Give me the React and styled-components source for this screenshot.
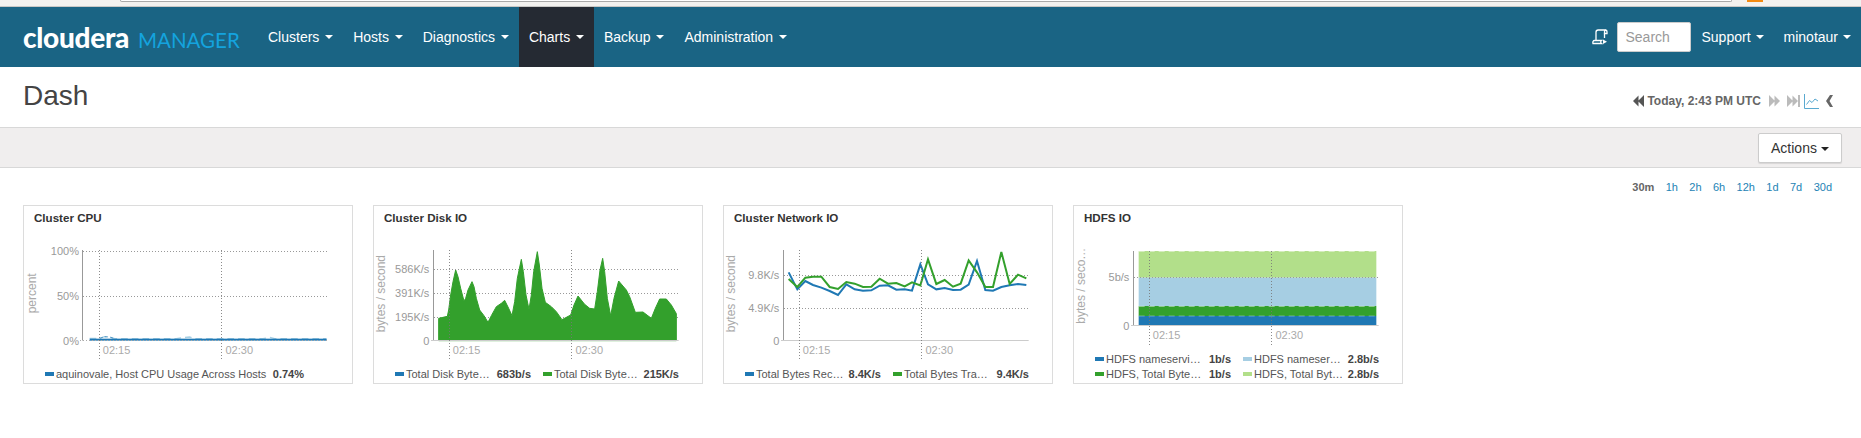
import React from "react";
import styled, { createGlobalStyle } from "styled-components";

const Global = createGlobalStyle`
  html, body { margin: 0; padding: 0; background: #fff; }
  body { font-family: "Liberation Sans", Arial, sans-serif; color: #333; overflow: hidden; }
`;

const Page = styled.div`
  width: 1861px;
  height: 438px;
  overflow: hidden;
`;

const BrowserEdge = styled.div`
  height: 6px;
  display: flex;
  align-items: flex-start;
  background: #f2f1ef;
  border-bottom: 1px solid #c9c8c6;
`;
const AddressBar = styled.div`
  margin-left: 120px;
  width: 1610px;
  height: 1px;
  background: #fff;
  border: 1px solid #a9a9a9;
  border-top: 0;
  border-radius: 0 0 2px 2px;
`;
const OrangeTab = styled.div`
  margin-left: 15px;
  width: 16px;
  height: 2px;
  background: #f28a12;
`;

const Navbar = styled.nav`
  height: 60px;
  display: flex;
  align-items: stretch;
  background: #1a6484;
`;
const Logo = styled.div`
  width: 235px;
  padding-left: 23px;
  display: flex;
  align-items: baseline;
  padding-top: 12px;
  box-sizing: content-box;
  font-family: Lato, sans-serif;
`;
const LogoMain = styled.span`
  font-size: 28px;
  line-height: 36px;
  font-weight: 900;
  color: #fff;
  letter-spacing: -0.3px;
`;
const LogoSub = styled.span`
  margin-left: 9px;
  font-size: 20.5px;
  font-weight: 400;
  color: #14a3de;
`;
const NavItem = styled.a`
  display: flex;
  align-items: center;
  padding: 0 10px;
  font-size: 14px;
  color: #fff;
  background: ${(p) => (p.$active ? "#252a33" : "transparent")};
`;
const Caret = styled.span`
  display: inline-block;
  margin-left: ${(p) => p.$gap ?? 5.8}px;
  vertical-align: 2px;
  width: 0;
  height: 0;
  border-top: 4px solid ${(p) => p.$color || "#fff"};
  border-left: 4px solid transparent;
  border-right: 4px solid transparent;
`;
const NavRight = styled.div`
  margin-left: auto;
  display: flex;
  align-items: stretch;
`;
const ScrollButton = styled.div`
  display: flex;
  align-items: center;
  padding-right: 9px;
`;
const SearchBox = styled.div`
  align-self: center;
  width: 74px;
  height: 30px;
  box-sizing: border-box;
  padding-left: 7px;
  display: flex;
  align-items: center;
  background: #fff;
  border: 1px solid #ccc;
  border-radius: 2px;
  font-size: 14px;
  color: #999;
`;

const Header = styled.header`
  height: 60px;
  display: flex;
  justify-content: space-between;
  align-items: center;
  padding: 0 28px 0 23px;
  border-bottom: 1px solid #d8d8d8;
  box-sizing: content-box;
`;
const Title = styled.h1`
  margin: 0 0 2px;
  font-size: 28px;
  line-height: 40px;
  font-weight: 400;
  color: #444;
`;
const TimeControls = styled.div`
  display: flex;
  align-items: center;
  margin-top: 8px;
`;
const TimeText = styled.span`
  margin: 0 8px 0 3px;
  font-size: 12px;
  font-weight: 700;
  color: #666;
`;
const IconSlot = styled.svg`
  display: block;
  margin-right: ${(p) => p.$gap || 0}px;
`;

const Toolbar = styled.div`
  height: 39px;
  display: flex;
  justify-content: flex-end;
  align-items: center;
  padding-right: 19px;
  background: #f0eeee;
  border-bottom: 1px solid #d8d8d8;
`;
const ActionsButton = styled.button`
  width: 84px;
  height: 30px;
  padding: 0;
  background: #fff;
  border: 1px solid #ccc;
  border-radius: 2px;
  font: 14px "Liberation Sans", Arial, sans-serif;
  color: #333;
  box-shadow: 0 1px 1px rgba(0, 0, 0, 0.1);
`;

const RangeRow = styled.div`
  height: 37px;
  display: flex;
  justify-content: flex-end;
  align-items: center;
  gap: 11.4px;
  padding-right: 29px;
  font-size: 11px;
`;
const RangeLink = styled.a`
  color: ${(p) => (p.$active ? "#666" : "#2483b5")};
  font-weight: ${(p) => (p.$active ? 700 : 400)};
`;

const Cards = styled.div`
  display: flex;
  gap: 20px;
  padding-left: 23px;
`;
const Card = styled.section`
  width: 330px;
  height: 179px;
  box-sizing: border-box;
  border: 1px solid #dcdcdc;
  display: flex;
  flex-direction: column;
`;
const CardTitle = styled.h3`
  margin: 0;
  height: 19px;
  padding: 5px 0 0 10px;
  box-sizing: border-box;
  font-size: 11.6px;
  line-height: 14px;
  font-weight: 700;
  color: #333;
`;
const ChartSvg = styled.svg`
  display: block;
  width: 328px;
  height: 137px;
`;
const Tick = styled.text`
  font-size: 33px;
  fill: #999;
  text-anchor: end;
  font-family: "Liberation Sans", Arial, sans-serif;
`;
const TimeLabel = styled.text`
  font-size: 33px;
  fill: #aaa;
  font-family: "Liberation Sans", Arial, sans-serif;
`;
const AxisLabel = styled.text`
  font-size: 36px;
  fill: #aaa;
  text-anchor: middle;
  font-family: "Liberation Sans", Arial, sans-serif;
`;
const Legend = styled.div`
  display: grid;
  grid-template-columns: ${(p) => (p.$single ? "259px" : "136px 136px")};
  column-gap: 12px;
  row-gap: 1px;
  padding-left: 21px;
  margin-top: ${(p) => p.$mt ?? 5}px;
`;
const LegendItem = styled.div`
  display: flex;
  align-items: center;
  height: 14px;
  font-size: 11px;
  color: #555;
  white-space: nowrap;
`;
const Swatch = styled.span`
  flex: none;
  width: 9px;
  height: 4px;
  margin-right: 2px;
  background: ${(p) => p.$color};
`;
const LegendValue = styled.b`
  margin-left: auto;
  color: #444;
`;

const BLUE = "#1f78b4";
const GREEN = "#33a02c";
const LBLUE = "#a6cee3";
const LGREEN = "#b2df8a";

const pts = (s) => s.trim().replace(/\s+/g, " ");

const DISK = pts(`222,370 235,367 248,364 252,345 258,300 265,260 273,225 280,245 288,280 298,318 303,310 310,285 322,260 328,275 335,310 345,345 358,362 370,382 380,362 395,335 410,325 420,316 432,340 442,362 450,320 458,250 470,193 476,230 484,300 493,343 500,300 507,230 518,170 524,210 532,280 542,322 560,335 575,350 592,374 605,367 618,360 628,330 640,303 660,328 675,340 690,342 698,290 706,225 714,190 720,230 728,310 738,362 748,310 762,258 785,285 795,305 812,352 835,351 860,370 872,340 885,312 905,312 920,330 935,356 935,437 222,437`);
const NET_BLUE = pts(`222,232 248,283 272,258 295,270 320,278 345,288 370,300 395,268 420,283 445,287 470,286 495,272 520,271 545,284 570,283 592,287 617,208 640,268 665,283 690,279 715,285 738,284 762,269 787,198 812,285 835,287 860,276 885,271 910,267 935,270`);
const NET_GREEN = pts(`222,252 248,276 272,248 295,245 320,245 345,276 370,282 395,261 420,266 445,276 470,275 495,251 520,266 545,264 570,274 592,262 617,271 640,193 665,267 690,255 715,275 738,266 762,196 787,232 812,276 835,276 860,171 885,267 910,239 935,250`);
const CPU_TOP = pts(`240,430 270,430 285,425 300,426 315,431 500,431 520,428 540,426 555,431 760,431 780,427 795,431 950,431`);

const charts = [
  {
    title: "Cluster CPU",
    x0: 40, axis: 218, right: 958, v1: 268, v2: 634, base: 437, top: 165, vEnd: 497, timeY: 477,
    yLabel: "percent", yLabelX: 79, yLabelY: 295, tickX: 208, baseDotted: true,
    ticks: [["100%", 169], ["50%", 303], ["0%", 437]],
    body: (
      <>
        <polyline points={CPU_TOP} fill="none" stroke={LBLUE} strokeWidth="4" strokeDasharray="20 12" />
        <polyline points="270,430 285,425 300,426 315,431" fill="none" stroke={BLUE} strokeWidth="2" strokeDasharray="10 6" />
        <rect x="240" y="431" width="711" height="6" fill={BLUE} />
      </>
    ),
    legend: [["aquinovale, Host CPU Usage Across Hosts", "0.74%", BLUE]],
  },
  {
    title: "Cluster Disk IO",
    yLabel: "bytes / second", yLabelX: 62, yLabelY: 296,
    ticks: [["586K/s", 223], ["391K/s", 295], ["195K/s", 367], ["0", 437]],
    body: (
      <>
        <polygon points={DISK} fill={GREEN} stroke={GREEN} strokeWidth="3" strokeLinejoin="round" />
        <rect x="222" y="435" width="713" height="3" fill={BLUE} />
      </>
    ),
    legend: [["Total Disk Byte…", "683b/s", BLUE], ["Total Disk Byte…", "215K/s", GREEN]],
  },
  {
    title: "Cluster Network IO",
    yLabel: "bytes / second", yLabelX: 62, yLabelY: 296,
    ticks: [["9.8K/s", 241], ["4.9K/s", 340], ["0", 437]],
    body: (
      <>
        <polyline points={NET_BLUE} fill="none" stroke={BLUE} strokeWidth="6" />
        <polyline points={NET_GREEN} fill="none" stroke={GREEN} strokeWidth="6" />
      </>
    ),
    legend: [["Total Bytes Rec…", "8.4K/s", BLUE], ["Total Bytes Tra…", "9.4K/s", GREEN]],
  },
  {
    title: "HDFS IO",
    base: 392, vEnd: 452, timeY: 431, top: 168, legendMt: -10,
    yLabel: "bytes / seco…", yLabelX: 62, yLabelY: 272,
    ticks: [["5b/s", 247], ["0", 392]],
    under: (
      <>
        <rect x="222" y="168" width="713" height="80" fill={LGREEN} />
        <rect x="222" y="248" width="713" height="85" fill={LBLUE} />
        <rect x="222" y="333" width="713" height="30" fill={GREEN} />
        <rect x="222" y="363" width="713" height="29" fill={BLUE} />
        <line x1="222" x2="935" y1="169" y2="169" stroke="#fff" strokeOpacity=".55" strokeWidth="3" strokeDasharray="18 12" />
        <line x1="222" x2="935" y1="334" y2="334" stroke="#fff" strokeOpacity=".55" strokeWidth="3" strokeDasharray="18 12" />
        <line x1="222" x2="935" y1="363" y2="363" stroke={LBLUE} strokeOpacity=".55" strokeWidth="3" strokeDasharray="18 12" />
      </>
    ),
    legend: [
      ["HDFS nameservi…", "1b/s", BLUE], ["HDFS nameser…", "2.8b/s", LBLUE],
      ["HDFS, Total Byte…", "1b/s", GREEN], ["HDFS, Total Byt…", "2.8b/s", LGREEN],
    ],
  },
];

function Chart({ c }) {
  const x0 = c.x0 ?? 25;
  const ox = x0 + 3;
  const snapX = (z) => Math.floor((z - ox) / 3) * 3 + ox + 1.5;
  const snapY = (z) => Math.floor((z - 90) / 3) * 3 + 90 + 1.5;
  const axis = snapX(c.axis ?? 205);
  const right = c.right ?? 942;
  const v1 = snapX(c.v1 ?? 253);
  const v2 = snapX(c.v2 ?? 619);
  const base = snapY(c.base ?? 437);
  const top = snapY(c.top ?? 165) - 1.5;
  const vEnd = c.vEnd ?? 497;
  const timeY = c.timeY ?? 477;
  const tickX = c.tickX ?? 194;
  const dots = "3 6";
  return (
    <Card>
      <CardTitle>{c.title}</CardTitle>
      <ChartSvg viewBox={`${ox} 90 984 411`}>
        {c.under}
        {c.ticks.slice(0, -1).map(([, y]) => (
          <line key={y} x1={axis + 1.5} x2={right} y1={snapY(y)} y2={snapY(y)} stroke="#999" strokeWidth="3" strokeDasharray={dots} />
        ))}
        {c.body}
        {c.ticks.map(([t, y]) => (
          <Tick key={t} x={tickX} y={y + 12}>{t}</Tick>
        ))}
        <line x1={axis} x2={axis} y1={top} y2={base} stroke="#999" strokeWidth="3" />
        <line x1={axis - 7.5} x2={right} y1={base} y2={base} stroke={c.baseDotted ? "#aaa" : "#ccc"} strokeWidth="3" strokeDasharray={c.baseDotted ? dots : undefined} />
        {[v1, v2].map((x) => (
          <line key={x} x1={x} x2={x} y1={top} y2={vEnd} stroke="#777" strokeOpacity=".85" strokeWidth="3" strokeDasharray={dots} />
        ))}
        <TimeLabel x={v1 + 10} y={timeY}>02:15</TimeLabel>
        <TimeLabel x={v2 + 12} y={timeY}>02:30</TimeLabel>
        <AxisLabel transform={`translate(${c.yLabelX} ${c.yLabelY}) rotate(-90)`}>{c.yLabel}</AxisLabel>
      </ChartSvg>
      <Legend $single={c.legend.length === 1} $mt={c.legendMt}>
        {c.legend.map(([name, value, color], i) => (
          <LegendItem key={i}>
            <Swatch $color={color} />
            {name}
            <LegendValue>{value}</LegendValue>
          </LegendItem>
        ))}
      </Legend>
    </Card>
  );
}

const DoubleArrow = ({ dir, color, bar, gap }) => (
  <IconSlot $gap={gap} width={bar ? 13 : 11} height="12" viewBox={bar ? "0 0 13 12" : "0 0 11 12"}>
    {dir === "left" ? (
      <path d="M0 6 5.5 0.5V11.5Z M5 6 11 0V12Z" fill={color} />
    ) : (
      <path d="M0 0 6 6 0 12Z M5.5 0.5 11 6 5.5 11.5Z" fill={color} />
    )}
    {bar && <rect x="11" y="0" width="2" height="12" fill={color} />}
  </IconSlot>
);

const NAV = ["Clusters", "Hosts", "Diagnostics", "Charts", "Backup", "Administration"];
const RANGES = ["1h", "2h", "6h", "12h", "1d", "7d", "30d"];

export default function App() {
  return (
    <Page>
      <Global />
      <BrowserEdge>
        <AddressBar />
        <OrangeTab />
      </BrowserEdge>
      <Navbar>
        <Logo>
          <LogoMain>cloudera</LogoMain>
          <LogoSub>MANAGER</LogoSub>
        </Logo>
        {NAV.map((n) => (
          <NavItem key={n} $active={n === "Charts"}>
            {n}
            <Caret />
          </NavItem>
        ))}
        <NavRight>
          <ScrollButton>
            <svg width="16" height="16" viewBox="0 0 16 16" fill="none" stroke="#fff" strokeWidth="1.3">
              <path d="M4 11V3.2C4 1.9 4.9 1 6.2 1H13.2C14.4 1 15 1.9 15 3V4.5H12.5V3C12.5 1.9 13 1 14 1" />
              <path d="M12.5 4.5V9" />
              <path d="M1 14.5C0.6 13 1 11.5 2.5 11.5H9.5C8.5 12.3 8.5 13.8 9.5 14.5Z" />
              <path d="M11 10.5 15 12.8 11 15Z" fill="#fff" stroke="none" />
            </svg>
          </ScrollButton>
          <SearchBox>Search</SearchBox>
          <NavItem>Support<Caret $gap={5} /></NavItem>
          <NavItem>minotaur<Caret $gap={5} /></NavItem>
        </NavRight>
      </Navbar>
      <Header>
        <Title>Dash</Title>
        <TimeControls>
          <DoubleArrow dir="left" color="#555" />
          <TimeText>Today, 2:43 PM UTC</TimeText>
          <DoubleArrow dir="right" color="#bbb" gap={7} />
          <DoubleArrow dir="right" color="#bbb" bar gap={4} />
          <IconSlot $gap={7} width="15" height="15" viewBox="0 0 15 15" fill="none" stroke="#5aa9d0" strokeWidth="1">
            <path d="M0.5 0V14.5H15" />
            <path d="M2.5 10.5 5.5 6.5 8 8.5 11 5 14 7" />
          </IconSlot>
          <IconSlot width="7" height="12" viewBox="0 0 7 12">
            <path d="M4 0H7L3.5 6 7 12H4L0 6Z" fill="#666" />
          </IconSlot>
        </TimeControls>
      </Header>
      <Toolbar>
        <ActionsButton>Actions<Caret $color="#222" $gap={4} /></ActionsButton>
      </Toolbar>
      <RangeRow>
        <RangeLink $active>30m</RangeLink>
        {RANGES.map((r) => <RangeLink key={r}>{r}</RangeLink>)}
      </RangeRow>
      <Cards>
        {charts.map((c) => <Chart key={c.title} c={c} />)}
      </Cards>
    </Page>
  );
}
